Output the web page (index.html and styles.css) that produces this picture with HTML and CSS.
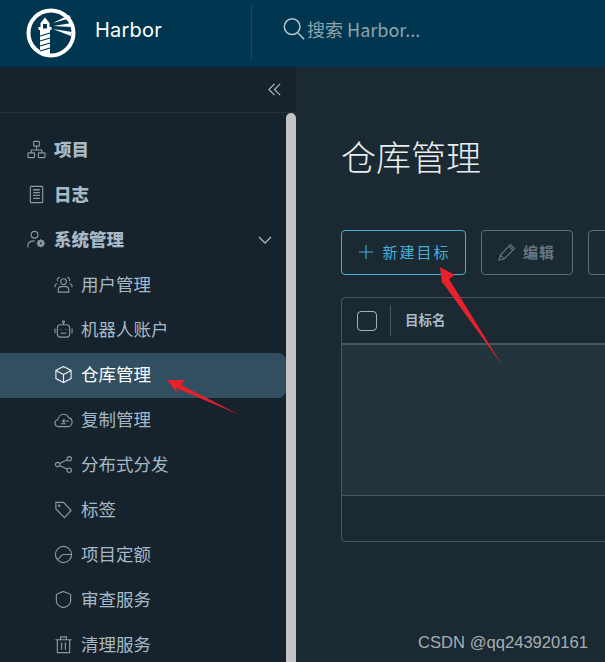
FILE: index.html
```html
<!DOCTYPE html>
<html lang="zh">
<head>
<meta charset="utf-8">
<title>Harbor</title>
<link rel="stylesheet" href="styles.css">
</head>
<body>
<header class="topbar">
  <div class="brand">
    <svg class="logo" viewBox="0 0 50 50">
      <circle cx="25" cy="25" r="22.5" fill="none" stroke="#fff" stroke-width="4"/>
      <path d="M14 45V22h-1.500v-3H14.500V15L19 9.500 23.500 15v4h2v3H24V46z" fill="#fff"/>
      <rect x="17" y="16" width="4" height="4.500" fill="#00364f"/>
      <path d="M14 28l10-3M14 33l10-3M14 38l10-3M14 43l10-3" stroke="#00364f" stroke-width="1.300" fill="none"/>
      <path d="M27 15l16-8 2 3zM27 18l19-3v4zM27 21l19 3-1 4z" fill="#fff"/>
    </svg>
    <span class="brand-name">Harbor</span>
  </div>
  <div class="search">
    <svg class="search-icon" viewBox="0 0 26 26"><circle cx="11" cy="10.500" r="8.500"/><path d="M17 17l7 7"/></svg>
    <span class="search-text">搜索 Harbor...</span>
  </div>
</header>
<div class="layout">
  <aside class="sidebar">
    <div class="collapse">
      <svg class="collapse-icon" viewBox="0 0 16 16"><path d="M8 2L2 8l6 6M14 2L8 8l6 6"/></svg>
    </div>
    <div class="sidebar-body">
      <nav class="nav">
        <a class="item top"><svg class="ico" viewBox="0 0 20 20"><rect x="7" y="1.500" width="6" height="5" rx=".8"/><rect x="1" y="13.500" width="7" height="5" rx=".8"/><rect x="12" y="13.500" width="7" height="5" rx=".8"/><path d="M10 6.500v4M4.500 13.500v-3h11v3"/></svg>项目</a>
        <a class="item top"><svg class="ico" viewBox="0 0 20 20"><rect x="3.500" y="1.500" width="13" height="17" rx="1"/><path d="M6.500 5h7M6.500 8h7M6.500 11h7M6.500 14h7" stroke-width="1.400"/></svg>日志</a>
        <a class="item top"><svg class="ico" viewBox="0 0 20 20"><circle cx="8" cy="5" r="3.500"/><path d="M1 18.500v-2.500c0-3 3-4.500 7-4.500"/><circle cx="14.500" cy="14" r="2.300" stroke-width="2.600"/><path d="M14.500 9.800v1.600M14.500 16.600v1.600M10.300 14h1.600M17.100 14h1.600M11.500 11l1.200 1.200M16.300 15.800l1.200 1.200M17.500 11l-1.200 1.200M12.700 15.800L11.500 17" stroke-width="1.600"/></svg>系统管理<svg class="chevron" viewBox="0 0 14 8"><path d="M1 1l6 6 6-6"/></svg></a>
        <a class="item sub"><svg class="ico" viewBox="0 0 20 20"><circle cx="10" cy="7" r="3"/><path d="M4.500 18v-3c0-2 2-3 5.500-3s5.500 1 5.500 3v3z"/><path d="M6 2.500a2.500 2.500 0 0 0-2 4M14 2.500a2.500 2.500 0 0 1 2 4M1 13v-1.500c0-1.500 1-2 2.500-2.500M19 13v-1.500c0-1.500-1-2-2.500-2.500"/></svg>用户管理</a>
        <a class="item sub"><svg class="ico" viewBox="0 0 20 20"><rect x="3.500" y="5" width="13" height="13" rx="3.500"/><circle cx="10" cy="1.800" r="1"/><path d="M10 2.800V5M1 9v5M19 9v5M7 14h6"/><path d="M7 9.500v.5M13 9.500v.5" stroke-width="2"/></svg>机器人账户</a>
        <a class="item sub active"><svg class="ico" viewBox="0 0 20 20"><path d="M10 1.500l8 4.200v8.600l-8 4.200-8-4.200V5.700zM2 5.700l8 4.300 8-4.300M10 10v8.500"/></svg>仓库管理</a>
        <a class="item sub"><svg class="ico" viewBox="0 0 20 20"><path d="M5 17.500c-2.500 0-4-1.500-4-3.700 0-2 1.500-3.300 3-3.500C4.500 7 7 4.500 10 4.500c2.500 0 4.500 1.500 5.300 3.500 2 .3 3.700 2.300 3.700 4.700 0 2.500-1.700 4.800-4 4.800z"/><path d="M9 11.500h7M11 9.500l-2 2 2 2M7 14.500h5" stroke-width="1.100"/></svg>复制管理</a>
        <a class="item sub"><svg class="ico" viewBox="0 0 20 20"><circle cx="16" cy="4" r="2.300"/><circle cx="3.800" cy="10" r="2.300"/><circle cx="16" cy="16" r="2.300"/><path d="M14 5L6 9M6 11l8 4"/></svg>分布式分发</a>
        <a class="item sub"><svg class="ico" viewBox="0 0 20 20"><path d="M2 2.500h8l8 8.500-7 7.500-9-9z"/><circle cx="5.500" cy="6" r=".7"/></svg>标签</a>
        <a class="item sub"><svg class="ico" viewBox="0 0 20 20"><circle cx="10" cy="10" r="8.500"/><path d="M4 15.500l4-4.500c1-1 2-1 3-1h7"/></svg>项目定额</a>
        <a class="item sub"><svg class="ico" viewBox="0 0 20 20"><path d="M10 1.500l7.500 3v7c0 3.500-3.500 6-7.500 7-4-1-7.500-3.500-7.500-7v-7z"/></svg>审查服务</a>
        <a class="item sub"><svg class="ico" viewBox="0 0 20 20"><path d="M1.500 5h17M7 5V2h6v3M3.500 5v13.500h13V5M8 8v7.500M12 8v7.500"/></svg>清理服务</a>
      </nav>
      <div class="scrollbar"></div>
    </div>
  </aside>
  <main class="content">
    <h1 class="title">仓库管理</h1>
    <div class="actions">
      <button class="btn primary"><svg class="btn-icon plus" viewBox="0 0 16 16"><path d="M8 1v14M1 8h14"/></svg>新建目标</button>
      <button class="btn disabled"><svg class="btn-icon pen" viewBox="0 0 20 20"><path d="M2 18l1.500-5L13.500 2.500l4 4L7 17zM3.500 13l3.500 4M12 4l4 4"/></svg>编辑</button>
      <button class="btn disabled"></button>
    </div>
    <div class="table">
      <div class="thead">
        <span class="checkbox"></span>
        <span class="sep"></span>
        <span class="th">目标名</span>
      </div>
      <div class="tbody"></div>
      <div class="tfoot"></div>
    </div>
  </main>
</div>
<svg class="marks" viewBox="0 0 605 662">
  <path d="M167 380L185 380 181 385 240 415 176 388 177 393z"/>
  <path d="M440 267L455 275 449 279 502 365 443 283 442 283z"/>
</svg>
<div class="watermark">CSDN @qq243920161</div>
</body>
</html>
```
FILE: styles.css
```css
* { box-sizing: border-box; }
html, body { height: 100%; }
body {
  margin: 0;
  height: 662px;
  overflow: hidden;
  position: relative;
  background: #1b2a32;
  font-family: "Noto Sans CJK SC", "Noto Sans", sans-serif;
}
.topbar {
  height: 67px;
  background: #00364f;
  display: flex;
  align-items: flex-start;
}
.brand {
  width: 252px;
  height: 55px;
  margin-top: 5px;
  padding-left: 26px;
  display: flex;
  align-items: center;
  border-right: 1px solid #1d4a60;
}
.logo { width: 50px; height: 50px; }
.brand-name {
  margin-left: 19px;
  color: #fff;
  font-family: "Inter", sans-serif;
  font-size: 20px;
  letter-spacing: .2px;
  margin-top: -5px;
}
.search {
  display: flex;
  align-items: center;
  height: 58px;
  margin-left: 30px;
}
.search-icon { width: 24px; height: 24px; fill: none; stroke: #b8c6ce; stroke-width: 1.600; }
.search-text {
  margin-left: 1px;
  color: #8fa3ae;
  font-size: 18px;
}
.layout { display: flex; height: 595px; }
.sidebar {
  width: 296px;
  flex: none;
  background: #17232c;
  display: flex;
  flex-direction: column;
}
.collapse {
  height: 46px;
  flex: none;
  border-bottom: 1px solid #26333b;
  display: flex;
  justify-content: flex-end;
  align-items: center;
  padding-right: 14px;
}
.collapse-icon { width: 15px; height: 15px; fill: none; stroke: #a9b6bf; stroke-width: 1.300; }
.sidebar-body { flex: 1; display: flex; min-height: 0; }
.nav { flex: 1; padding-top: 15px; overflow: hidden; }
.scrollbar {
  width: 10px;
  flex: none;
  background: #c4c4c4;
  border-radius: 5px 5px 0 0;
}
.item {
  height: 45px;
  padding-bottom: 4px;
  display: flex;
  align-items: center;
  color: #a6b9c7;
  font-size: 17.500px;
  white-space: nowrap;
}
.item .ico {
  width: 19px;
  height: 19px;
  flex: none;
  margin-top: 2px;
  fill: none;
  stroke: #8a99a3;
  stroke-width: 1.200;
}
.top { padding-left: 27px; font-weight: 900; position: relative; }
.top .ico { margin-right: 8px; }
.sub { padding-left: 54px; }
.sub .ico { margin-right: 8px; }
.active {
  background: #324f61;
  color: #fff;
  border-radius: 0 8px 8px 0;
}
.active .ico { stroke: #e8eef2; }
.chevron {
  width: 14px;
  height: 8px;
  margin-top: 2px;
  margin-left: auto;
  margin-right: 14px;
  fill: none;
  stroke: #a9b6bf;
  stroke-width: 1.400;
}
.content {
  flex: 1;
  min-width: 0;
  overflow: hidden;
  padding-left: 45px;
}
.title {
  margin: 63px 0 0;
  height: 52px;
  font-size: 35px;
  line-height: 52px;
  font-weight: 300;
  color: #e9eef1;
  white-space: nowrap;
}
.actions {
  display: flex;
  gap: 15px;
  margin-top: 48px;
  width: 400px;
}
.btn {
  height: 45px;
  flex: none;
  display: flex;
  align-items: center;
  justify-content: center;
  background: transparent;
  border: 1px solid #5d6d76;
  border-radius: 4px;
  font: inherit;
  padding: 0 0 2px;
}
.primary {
  width: 125px;
  padding-left: 4px;
  border-color: #49afd9;
  color: #49afd9;
  font-size: 15px;
  letter-spacing: 2px;
}
.disabled {
  width: 92px;
  color: #667680;
  font-size: 15px;
  font-weight: 700;
  letter-spacing: 1px;
}
.btn-icon {
  width: 18px;
  height: 18px;
  margin-right: 7px;
  fill: none;
  stroke: #667680;
  stroke-width: 1.100;
}
.pen { width: 20px; height: 20px; margin-right: 6px; margin-left: -2px; }
.plus { width: 16px; height: 16px; margin-right: 8px; stroke: #49afd9; margin-left: -2px; }
.table {
  width: 400px;
  margin-top: 22px;
  height: 245px;
  border: 1px solid #485862;
  border-radius: 4px;
  display: flex;
  flex-direction: column;
}
.thead {
  height: 47px;
  flex: none;
  display: flex;
  align-items: center;
  padding-left: 15px;
  border-bottom: 2px solid #485862;
}
.checkbox {
  width: 20px;
  height: 20px;
  border: 1px solid #a3b1ba;
  border-radius: 4px;
}
.sep { width: 1px; height: 31px; background: #485862; margin-left: 13px; }
.th {
  margin-left: 14px;
  padding-bottom: 4px;
  color: #a9bac6;
  font-size: 13.500px;
  font-weight: 700;
}
.tbody { height: 151px; flex: none; background: #24343c; border-bottom: 1px solid #485862; }
.tfoot { flex: 1; }
.marks {
  position: absolute;
  left: 0;
  top: 0;
  width: 605px;
  height: 662px;
  fill: #e8212b;
  pointer-events: none;
}
.watermark {
  position: absolute;
  left: 418px;
  top: 633px;
  color: #a6aeb2;
  font-family: "Liberation Sans", sans-serif;
  font-size: 16.600px;
  line-height: 20px;
  white-space: nowrap;
}
```
